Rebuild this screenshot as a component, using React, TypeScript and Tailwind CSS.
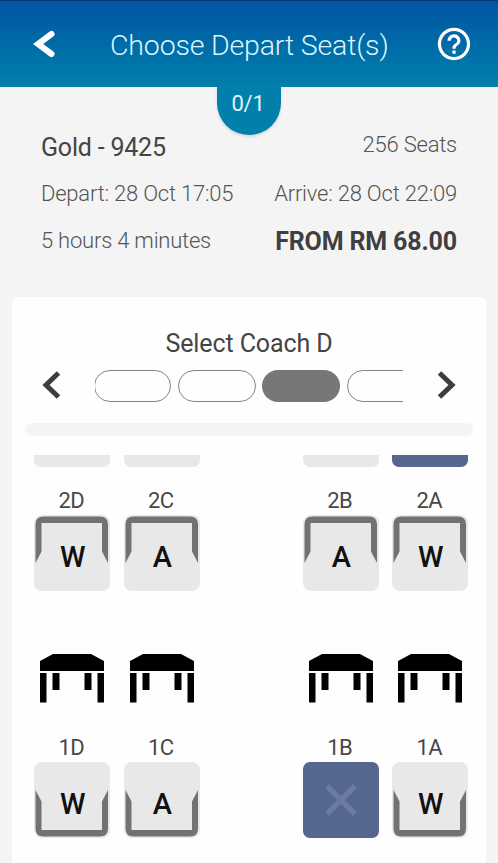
type Seat = {
  label: string;
  kind: "W" | "A" | "taken";
};

type Slot = Seat | null;

const backRow: Slot[] = [
  { label: "2D", kind: "W" },
  { label: "2C", kind: "A" },
  null,
  { label: "2B", kind: "A" },
  { label: "2A", kind: "W" },
];

const frontRow: Slot[] = [
  { label: "1D", kind: "W" },
  { label: "1C", kind: "A" },
  null,
  { label: "1B", kind: "taken" },
  { label: "1A", kind: "W" },
];

const previousRow = ["bg-[#e8e8e8]", "bg-[#e8e8e8]", "", "bg-[#e8e8e8]", "bg-[#55668f]"];

const tables = [true, true, false, true, true];

function SeatTile({ kind, flipped }: { kind: Seat["kind"]; flipped?: boolean }) {
  if (kind === "taken") {
    return (
      <div className="flex h-19 w-19 items-center justify-center rounded-[7px] bg-[#55668f]">
        <svg width="34" height="34" viewBox="0 0 34 34" stroke="#6a7aa4" strokeWidth="5.5">
          <path d="M3 3 31 31M31 3 3 31" />
        </svg>
      </div>
    );
  }

  return (
    <div className="relative flex h-19 w-19 items-center justify-center rounded-[8px] bg-[#e8e8e8]">
      <svg
        className={flipped ? "absolute inset-0 -scale-y-100" : "absolute inset-0"}
        width="76"
        height="76"
        viewBox="0 0 76 76"
      >
        <path
          d="M1.5 48V9.5Q1.5 1.5 9.5 1.5H66Q74 1.5 74 9.5V48L68 36.5V8H7.5V36.5Z"
          fill="#727272"
        />
      </svg>
      <span className="relative pt-[8px] pl-[1px] text-[29px] leading-none font-medium text-[#111]">
        {kind}
      </span>
    </div>
  );
}

function SeatRow({ seats, flipped }: { seats: Slot[]; flipped?: boolean }) {
  return (
    <div className="grid grid-cols-[repeat(5,76px)] gap-x-[13.5px]">
      {seats.map((seat, i) =>
        seat ? (
          <div key={seat.label}>
            <div className="flex h-[30px] items-center justify-center pr-[2px] text-[22px] tracking-[-0.6px] text-[#484848]">
              {seat.label}
            </div>
            <SeatTile kind={seat.kind} flipped={flipped} />
          </div>
        ) : (
          <div key={i} />
        ),
      )}
    </div>
  );
}

function TableIcon() {
  return (
    <svg className="ml-[6px]" width="64" height="49" viewBox="0 0 64 49">
      <path
        d="M0 7 13 0H51L64 7V17H0ZM0 19H6.5V48.5H0ZM12.5 19H19.5V36H12.5ZM44.5 19H51.5V36H44.5ZM57.5 19H64V48.5H57.5Z"
        fill="#000"
      />
    </svg>
  );
}

function Header() {
  return (
    <header className="relative h-[87px] border-t border-[#063b78] bg-linear-to-b from-[#0355a3] to-[#0280ab]">
      <div className="flex h-[86px] items-center pr-[27px] pl-[33px]">
        <svg width="22" height="28" viewBox="0 0 22 28" fill="none" stroke="#fff" strokeWidth="6">
          <path d="M18.5 4 5 14 18.5 24" strokeLinecap="round" />
        </svg>
        <h1 className="ml-[55px] flex-1 pt-[5px] text-[28.5px] font-light tracking-[-0.17px] whitespace-nowrap text-[#dcf4ff]">
          Choose Depart Seat(s)
        </h1>
        <svg width="34" height="34" viewBox="1.5 1.5 21 21" fill="#fff">
          <path d="M11 18h2v-2h-2v2zm1-16C6.48 2 2 6.48 2 12s4.48 10 10 10 10-4.48 10-10S17.52 2 12 2zm0 18c-4.41 0-8-3.59-8-8s3.59-8 8-8 8 3.59 8 8-3.59 8-8 8zm0-14c-2.21 0-4 1.79-4 4h2c0-1.1.9-2 2-2s2 .9 2 2c0 2-3 1.75-3 5h2c0-2.25 3-2.5 3-5 0-2.21-1.79-4-4-4z" />
        </svg>
      </div>
      <div className="absolute top-[85px] left-[217px] flex h-[49px] w-[64px] justify-center rounded-b-[32px] bg-[#0280ab] pt-px pr-[2px] text-[22px] tracking-[-0.2px] text-[#dcf7ff] shadow-[0_2px_3px_rgba(0,0,0,0.12)] [clip-path:inset(0_-6px_-6px_-6px)]">
        0/1
      </div>
    </header>
  );
}

function TripSummary() {
  return (
    <section className="flex h-[210px] flex-col px-[41px] pt-[41px] text-[22px] font-light tracking-[-0.22px] text-[#555]">
      <div className="flex h-[41px] justify-between leading-[32px] whitespace-nowrap">
        <span className="pt-[4px] text-[25px] font-normal tracking-[-0.2px] text-[#444]">Gold - 9425</span>
        <span className="pt-px">256 Seats</span>
      </div>
      <div className="flex h-[48px] items-center justify-between whitespace-nowrap">
        <span>Depart: 28 Oct 17:05</span>
        <span>Arrive: 28 Oct 22:09</span>
      </div>
      <div className="flex h-[48px] items-center justify-between whitespace-nowrap">
        <span className="pb-[2px]">5 hours 4 minutes</span>
        <span className="pt-px text-[25px] font-bold tracking-[-0.15px] text-[#3f3f3f]">FROM RM 68.00</span>
      </div>
    </section>
  );
}

function CoachPicker() {
  return (
    <div className="flex h-[32px] items-center">
      <svg className="mb-[2px] ml-[30px]" width="20" height="28" viewBox="0 0 20 28" fill="none" stroke="#3d3d3d" strokeWidth="5">
        <path d="M16.5 2 4 14 16.5 26" />
      </svg>
      <div className="ml-[33px] flex w-[308px] gap-[6.5px] overflow-hidden">
        <div className="-ml-[1px] h-[32px] w-[77px] shrink-0 rounded-full border border-[#858585]" />
        <div className="h-[32px] w-[78px] shrink-0 rounded-full border border-[#858585]" />
        <div className="h-[32px] w-[78px] shrink-0 rounded-full bg-[#777]" />
        <div className="h-[32px] w-[78px] shrink-0 rounded-full border border-[#858585]" />
      </div>
      <svg className="mb-[2px] ml-[33px]" width="20" height="28" viewBox="0 0 20 28" fill="none" stroke="#3d3d3d" strokeWidth="5">
        <path d="M3.5 2 16 14 3.5 26" />
      </svg>
    </div>
  );
}

export default function App() {
  return (
    <div className="flex h-[863px] w-[498px] flex-col overflow-hidden bg-[#f4f4f4] font-[Roboto,sans-serif]">
      <Header />
      <TripSummary />
      <main className="mr-[12px] ml-[12px] flex-1 rounded-t-[6px] bg-[#fefefe]">
        <h2 className="h-[73px] pt-[28px] text-center text-[25px] tracking-[-0.1px] text-[#444]">Select Coach D</h2>
        <CoachPicker />
        <div className="mx-[13px] mt-[21px] h-[13px] rounded-full bg-[#f4f4f4]" />
        <div className="mt-[19px] ml-[22.3px] overflow-hidden">
          <div className="grid grid-cols-[repeat(5,76px)] gap-x-[13.5px]">
            {previousRow.map((color, i) => (
              <div key={i} className={`h-[12px] rounded-b-[7px] ${color}`} />
            ))}
          </div>
          <div className="mt-[18px]">
            <SeatRow seats={backRow} />
          </div>
          <div className="mt-[63px] grid grid-cols-[repeat(5,76px)] gap-x-[13.5px]">
            {tables.map((table, i) => (
              <div key={i}>{table && <TableIcon />}</div>
            ))}
          </div>
          <div className="mt-[29px]">
            <SeatRow seats={frontRow} flipped />
          </div>
        </div>
      </main>
    </div>
  );
}
